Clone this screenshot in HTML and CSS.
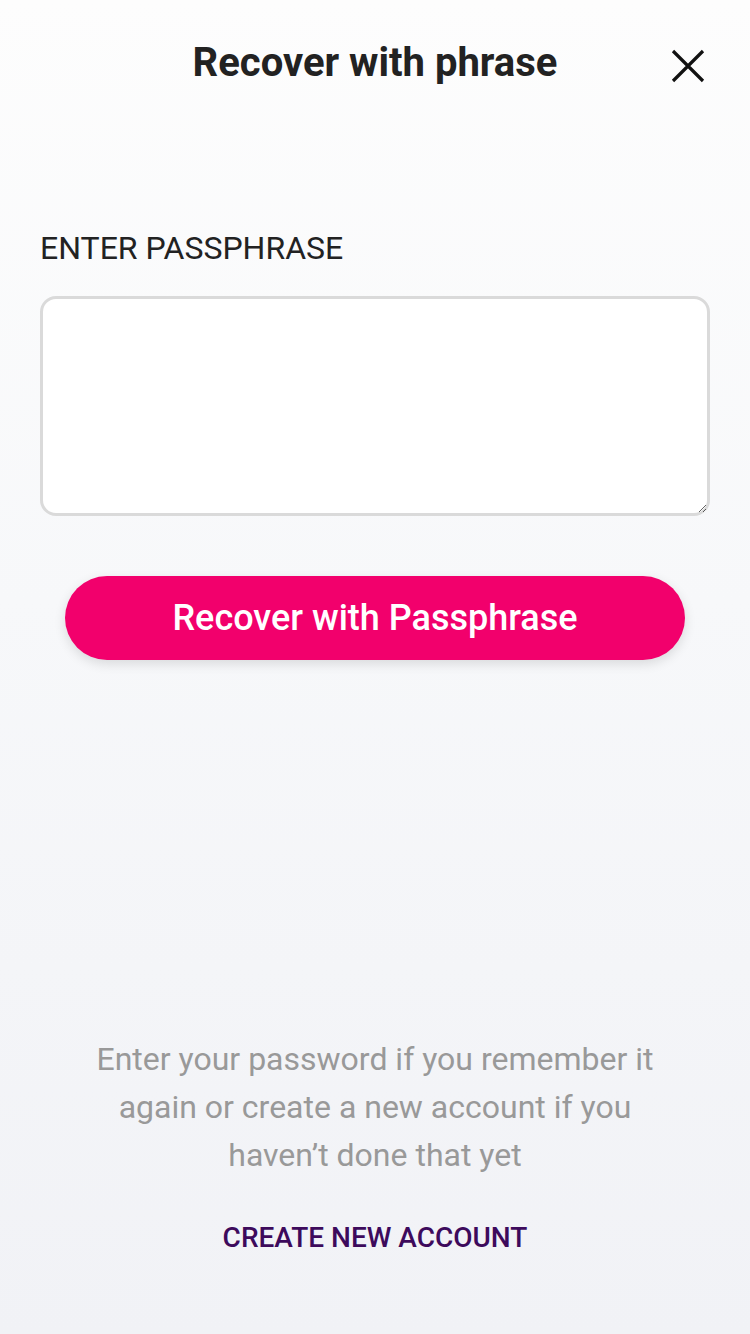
FILE: index.html
```html
<!DOCTYPE html>
<html>
<head>
<meta charset="utf-8">
<link rel="stylesheet" href="styles.css">
</head>
<body>
<div class="screen">
  <header class="header">
    <h1 class="title">Recover with phrase</h1>
    <button class="close" aria-label="Close">
      <svg width="36" height="36" viewBox="0 0 36 36"><path d="M3 3 L33 33 M33 3 L3 33" stroke="#111" stroke-width="3.2" fill="none"/></svg>
    </button>
  </header>
  <main class="form">
    <label class="label" for="phrase">ENTER PASSPHRASE</label>
    <textarea id="phrase" class="input"></textarea>
    <button class="primary">Recover with Passphrase</button>
  </main>
  <footer class="footer">
    <p class="hint">Enter your password if you remember it again or create a new account if you haven’t done that yet</p>
    <a class="link" href="#">CREATE NEW ACCOUNT</a>
  </footer>
</div>
</body>
</html>
```
FILE: styles.css
```css
html, body {
  margin: 0;
  padding: 0;
}
body {
  font-family: Roboto, "Liberation Sans", sans-serif;
  background: linear-gradient(#fdfdfd 0%, #f7f8fa 45%, #f1f2f6 100%);
  min-height: 1334px;
}
.screen {
  width: 750px;
  height: 1334px;
  display: flex;
  flex-direction: column;
}
.header {
  position: relative;
  height: 128px;
  display: flex;
  justify-content: center;
}
.title {
  margin: 0;
  padding-top: 38px;
  font-size: 40px;
  font-weight: 700;
  color: #222;
  line-height: 50px;
}
.close {
  position: absolute;
  right: 44px;
  top: 48px;
  background: none;
  border: 0;
  padding: 0;
  width: 36px;
  height: 36px;
}
.form {
  padding: 100px 40px 0;
  display: flex;
  flex-direction: column;
}
.label {
  font-size: 32px;
  color: #222;
  line-height: 40px;
  margin-bottom: 28px;
}
.input {
  box-sizing: border-box;
  height: 220px;
  width: 670px;
  border: 3px solid #dadada;
  border-radius: 16px;
  background: #fff;
  resize: vertical;
  font: inherit;
}
.primary {
  align-self: center;
  margin-top: 60px;
  width: 620px;
  height: 84px;
  border: 0;
  border-radius: 42px;
  background: #f2006c;
  color: #fff;
  font-family: inherit;
  font-size: 36px;
  font-weight: 500;
  box-shadow: 0 4px 12px rgba(0,0,0,0.12);
}
.footer {
  margin-top: auto;
  padding-bottom: 78px;
  display: flex;
  flex-direction: column;
  align-items: center;
}
.hint {
  margin: 0;
  width: 580px;
  text-align: center;
  font-size: 32px;
  line-height: 48px;
  color: #999;
}
.link {
  margin-top: 41px;
  font-size: 28px;
  font-weight: 500;
  color: #3d0a5c;
  text-decoration: none;
  line-height: 36px;
}
```
